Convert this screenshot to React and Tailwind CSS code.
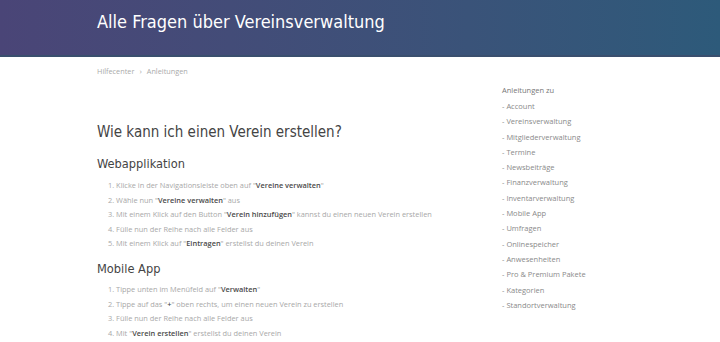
import React from "react";

const web = [
  ["Klicke in der Navigationsleiste oben auf ", "Vereine verwalten", ""],
  ["Wähle nun ", "Vereine verwalten", " aus"],
  ["Mit einem Klick auf den Button ", "Verein hinzufügen", " kannst du einen neuen Verein erstellen"],
  ["Fülle nun der Reihe nach alle Felder aus", null, ""],
  ["Mit einem Klick auf ", "Eintragen", " erstellst du deinen Verein"],
];

const mobile = [
  ["Tippe unten im Menüfeld auf ", "Verwalten", ""],
  ["Tippe auf das ", "+", " oben rechts, um einen neuen Verein zu erstellen"],
  ["Fülle nun der Reihe nach alle Felder aus", null, ""],
  ["Mit ", "Verein erstellen", " erstellst du deinen Verein"],
];

const topics = [
  "Account",
  "Vereinsverwaltung",
  "Mitgliederverwaltung",
  "Termine",
  "Newsbeiträge",
  "Finanzverwaltung",
  "Inventarverwaltung",
  "Mobile App",
  "Umfragen",
  "Onlinespeicher",
  "Anwesenheiten",
  "Pro & Premium Pakete",
  "Kategorien",
  "Standortverwaltung",
];

const display = { fontFamily: '"DejaVu Sans Condensed", "Liberation Sans", sans-serif' };
const body = { fontFamily: '"Open Sans", sans-serif' };

function Steps({ items }) {
  return (
    <ol className="flex flex-col gap-[4.5px] pl-[11px] text-[7.4px] leading-[10px] text-[#a8a8a8]">
      {items.map(([pre, bold, post], i) => (
        <li key={i}>
          {i + 1}. {pre}
          {bold !== null && (
            <>
              "<b className="font-semibold text-[#4a4a4a]">{bold}</b>"
            </>
          )}
          {post}
        </li>
      ))}
    </ol>
  );
}

export default function App() {
  return (
    <div className="h-[342px] w-[720px] overflow-hidden bg-white" style={body}>
      {/* Header */}
      <header className="h-[57px] border-b-2 border-[#3a4f6e] bg-gradient-to-r from-[#4a4577] to-[#2d5a7a] pl-[97px] pt-[10px]">
        <h1 className="text-[18px] leading-[24px] font-light text-white" style={display}>
          Alle Fragen über Vereinsverwaltung
        </h1>
      </header>

      <div className="flex pl-[97px]">
        {/* Main */}
        <main className="w-[405px]">
          <div className="mt-[9px] flex h-[10px] items-center gap-[5px] text-[7.3px] text-[#aaa]">
            <span>Hilfecenter</span>
            <span className="text-[8px]">›</span>
            <span>Anleitungen</span>
          </div>

          <h2 className="mt-[46px] text-[15px] leading-[20px] text-[#444]" style={display}>
            Wie kann ich einen Verein erstellen?
          </h2>

          <h3 className="mt-[13px] mb-[7px] text-[12.7px] leading-[18px] text-[#444]" style={display}>
            Webapplikation
          </h3>
          <Steps items={web} />

          <h3 className="mt-[12px] mb-[6px] text-[12.7px] leading-[18px] text-[#444]" style={display}>
            Mobile App
          </h3>
          <Steps items={mobile} />
        </main>

        {/* Sidebar */}
        <aside className="pt-[28px] text-[7.5px] text-[#8a8a8a]">
          <p className="leading-[11px] text-[#777]">Anleitungen zu</p>
          <ul className="mt-[5px] flex flex-col gap-[4px] leading-[11.3px]">
            {topics.map((t) => (
              <li key={t}>- {t}</li>
            ))}
          </ul>
        </aside>
      </div>
    </div>
  );
}
